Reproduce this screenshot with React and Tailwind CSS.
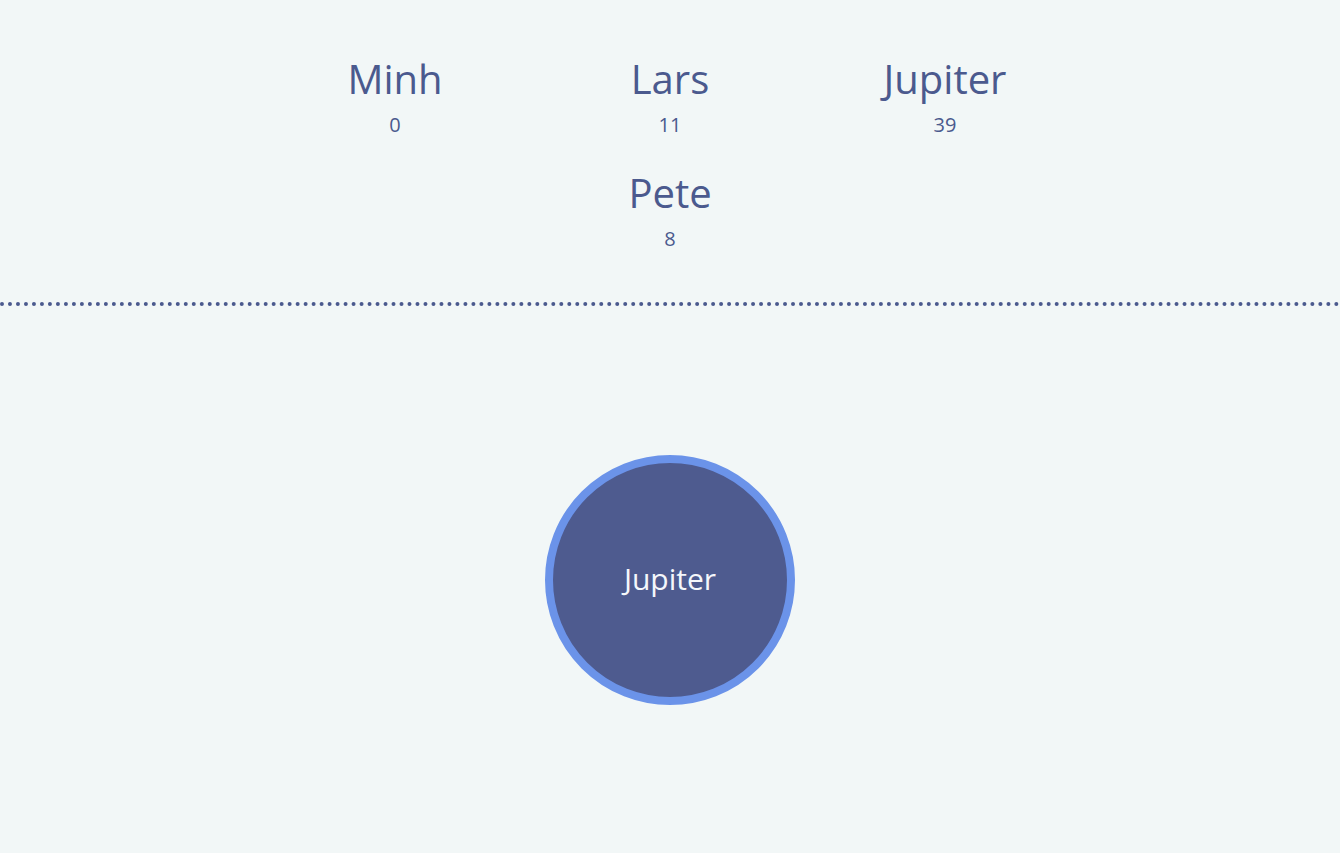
import React from 'react';

const players = [
  { name: 'Minh', score: 0 },
  { name: 'Lars', score: 11 },
  { name: 'Jupiter', score: 39 },
  { name: 'Pete', score: 8 },
];

const App = () => {
  return (
    <div className="min-h-[853px] bg-[#f2f7f7] text-[#4b5a8e] font-['Open_Sans',sans-serif]">

      {/* Scoreboard */}
      <div className="w-[825px] mx-auto pt-[52px] flex flex-wrap justify-center gap-y-[28px]">
        {players.map((p) => (
          <div key={p.name} className="w-[275px] flex flex-col items-center">
            <div className="text-[40px] leading-[54px]">{p.name}</div>
            <div className="mt-[5px] text-[20px] leading-[27px]">{p.score}</div>
          </div>
        ))}
      </div>

      <div className="mt-[50px] border-t-4 border-dotted border-[#4b5a8e]" />

      {/* Current turn */}
      <div className="flex justify-center pt-[149px]">
        <div className="w-[250px] h-[250px] rounded-full border-8 border-[#6b93e9] bg-[#4e5b8f] flex items-center justify-center">
          <span className="text-[30px] leading-[40px] text-[#f5f7fb] -mt-[3px]">Jupiter</span>
        </div>
      </div>

    </div>
  );
};

export default App;
